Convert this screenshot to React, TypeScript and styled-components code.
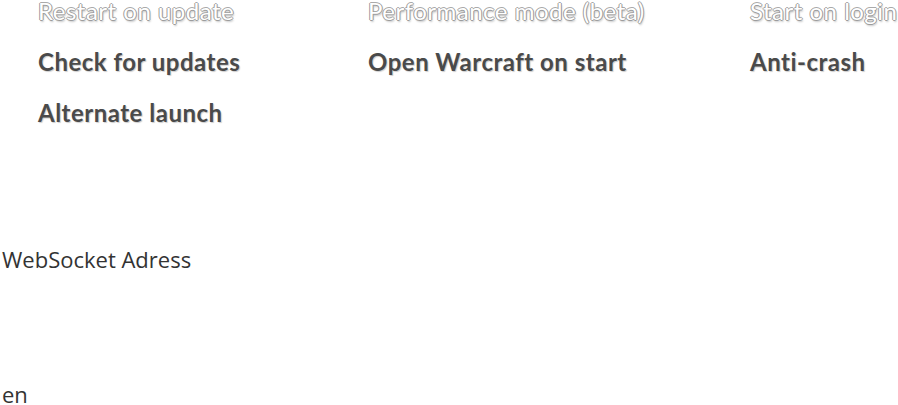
import React from "react";
import styled, { createGlobalStyle } from "styled-components";

const Global = createGlobalStyle`
  html, body { margin: 0; padding: 0; background: #ffffff; }
  body { font-family: "Open Sans", "Noto Sans", sans-serif; overflow: hidden; }
`;

const Page = styled.div`
  display: flex;
  flex-direction: column;
  width: 898px;
  height: 405px;
`;

const Options = styled.div`
  display: grid;
  grid-template-columns: 330px 382px auto;
  row-gap: 22px;
  padding-left: 38px;
  margin-top: -4px;
`;

const Option = styled.label<{ $muted?: boolean }>`
  font-family: Lato, "Liberation Sans", sans-serif;
  font-size: 24px;
  line-height: 29px;
  letter-spacing: 0.5px;
  white-space: nowrap;
  font-weight: ${(p) => (p.$muted ? 400 : 700)};
  color: ${(p) => (p.$muted ? "#ffffff" : "#4a4a4a")};
  text-shadow: ${(p) =>
    p.$muted
      ? "1px 0 0 #9c9c9c, -1px 0 0 #9c9c9c, 0 1px 0 #9c9c9c, 0 -1px 0 #aaaaaa, 1px 2px 2px #c4c4c4"
      : "1px 1px 1px rgba(0,0,0,0.2)"};
`;

const FieldLabel = styled.div<{ $top: number }>`
  margin-top: ${(p) => p.$top}px;
  padding-left: 2px;
  font-family: "Open Sans", "Noto Sans", sans-serif;
  font-size: 22px;
  line-height: 30px;
  color: #333333;
`;

const rows: { label: string; muted?: boolean }[] = [
  { label: "Restart on update", muted: true },
  { label: "Performance mode (beta)", muted: true },
  { label: "Start on login", muted: true },
  { label: "Check for updates" },
  { label: "Open Warcraft on start" },
  { label: "Anti-crash" },
  { label: "Alternate launch" },
];

export default function App() {
  return (
    <>
      <Global />
      <Page>
        <Options>
          {rows.map((r) => (
            <Option key={r.label} $muted={r.muted}>
              {r.label}
            </Option>
          ))}
        </Options>
        <FieldLabel $top={117}>WebSocket Adress</FieldLabel>
        <FieldLabel $top={105}>en</FieldLabel>
      </Page>
    </>
  );
}
